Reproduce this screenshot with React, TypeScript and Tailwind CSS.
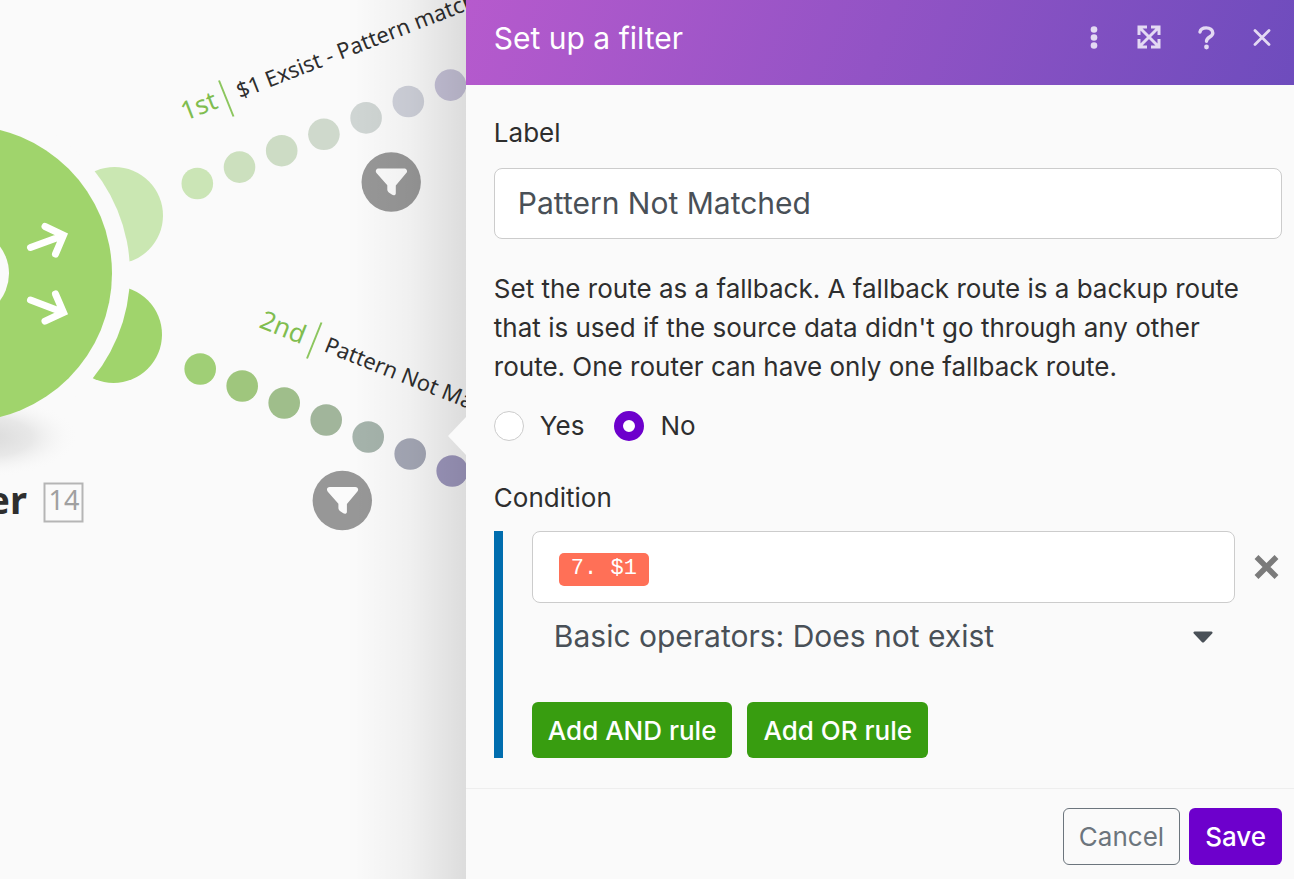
import React, { useState } from "react";

const DOT_COLORS = ["#a0cf76", "#9fc67d", "#9fbe8b", "#a1b59b", "#a5b3ab", "#a5a8b6", "#9f99bf"];
const PALE_DOT_COLORS = ["#cbe5b6", "#cce0be", "#cddcc5", "#cfd9cc", "#cfd5d3", "#cfd1da", "#c8c4da"];

function Funnel({ x, y }: { x: number; y: number }) {
  return (
    <g transform={`translate(${x} ${y})`}>
      <circle r="29.7" fill="#979797" />
      <path
        d="M-12.500-13.600h25.400c2.800 0 3.800 2.800 2.200 4.700L4.600 3.600v7.600c0 2-2 2.600-3.600 1.600l-3.400-2.400c-1-.8-1.500-1.700-1.500-2.900V3.200l-10.600-12c-1.700-2-.8-4.800 2-4.800z"
        fill="#fbfbfb"
      />
    </g>
  );
}

function ScenarioCanvas() {
  return (
    <section aria-label="Scenario" className="relative w-[36%] shrink-0 overflow-hidden bg-[#fafafa]">
      <svg width="640" height="879" viewBox="0 0 640 879" className="absolute top-0 left-0 max-w-none">
        <defs>
          <radialGradient id="ground">
            <stop offset="0" stopColor="#dadada" />
            <stop offset="0.5" stopColor="#e8e8e8" />
            <stop offset="1" stopColor="#fafafa" stopOpacity="0" />
          </radialGradient>
        </defs>
        <circle cx="114.500" cy="215.500" r="48.500" fill="#cae7b2" />
        <circle cx="113.500" cy="334.500" r="48.500" fill="#a0d46c" />
        <circle cx="-36" cy="273.500" r="166" fill="#fafafa" />
        <ellipse cx="-14" cy="437" rx="92" ry="40" fill="url(#ground)" />
        <circle cx="-36" cy="273.500" r="148" fill="#a0d46c" />
        <circle cx="-36" cy="273.500" r="45" fill="#fafafa" />
        <g fill="none" stroke="#fff" strokeWidth="7" strokeLinecap="round" strokeLinejoin="miter">
          <path d="M30.500 247.500 62 236M45 226.500l18.500 8.800-8 18.700" />
          <path d="M30.500 300 62 312M55.500 294l8 18.500-18.500 8.700" />
        </g>
        {PALE_DOT_COLORS.map((c, i) => (
          <circle key={c} cx={197.3 + 42.2 * i} cy={183.5 - 16.4 * i} r="15.800" fill={c} />
        ))}
        {DOT_COLORS.map((c, i) => (
          <circle key={c} cx={200.2 + 42 * i} cy={369 + 17 * i} r="15.800" fill={c} />
        ))}
        <Funnel x={391.2} y={182} />
        <Funnel x={342.3} y={500.5} />
        <g fontFamily='"Noto Sans", sans-serif'>
          <g transform="translate(185 121) rotate(-21.300)">
            <text fontSize="26" fill="#80bd4f">1st</text>
          </g>
          <path d="M219 80.500 233.500 116.500" stroke="#8cc65e" strokeWidth="2" />
          <g transform="translate(240 99) rotate(-21.300)">
            <text fontSize="22" fill="#2e2e2e">$1 Exsist - Pattern matched</text>
          </g>
          <g transform="translate(258 327) rotate(21.700)">
            <text fontSize="26" fill="#80bd4f">2nd</text>
          </g>
          <path d="M321.500 322.500 307 358.500" stroke="#8cc65e" strokeWidth="2" />
          <g transform="translate(323 351) rotate(21.700)">
            <text fontSize="22" fill="#2e2e2e">Pattern Not Matched</text>
          </g>
          <text x="27" y="514" fontSize="38" fontWeight="700" textAnchor="end" fill="#2e2e2e">Router</text>
          <rect x="44.500" y="483.500" width="38" height="38" fill="none" stroke="#b5b5b5" strokeWidth="2" />
          <text x="64" y="510" fontSize="27" textAnchor="middle" fill="#a0a0a0">14</text>
        </g>
      </svg>
      <div className="absolute inset-y-0 right-0 w-28 bg-linear-to-r from-transparent via-black/4 to-black/12" />
      <svg width="19" height="38" viewBox="0 0 19 38" className="absolute top-[417px] right-0">
        <path d="M19 0 1 19l18 19z" fill="#fafafa" />
      </svg>
    </section>
  );
}

function PanelHeader() {
  const button = "flex h-10 w-10 items-center justify-center";
  return (
    <header className="flex h-[85px] items-start justify-between bg-linear-[110deg] from-[#b65acd] to-[#6e4cbd] pt-[18px] pr-3 pl-7 text-[#e3d9f3]">
      <h1 className="text-[30px] leading-10 text-white">Set up a filter</h1>
      <div className="flex gap-4">
        <button type="button" aria-label="More options" className={button}>
          <svg width="10" height="24" viewBox="0 0 10 24" fill="currentColor">
            <circle cx="5" cy="3.500" r="3.300" />
            <circle cx="5" cy="11.500" r="3.300" />
            <circle cx="5" cy="19.500" r="3.300" />
          </svg>
        </button>
        <button type="button" aria-label="Expand" className={button}>
          <svg width="26" height="26" viewBox="0 0 26 26" fill="none" stroke="currentColor" strokeWidth="3">
            <path d="M2 10V2h8M14 2h8v8M22 14v8h-8M10 22H2v-8M3 3l18 18M21 3 3 21" />
          </svg>
        </button>
        <button type="button" aria-label="Help" className={button}>
          <svg width="18" height="24" viewBox="0 0 18 24" fill="none" stroke="currentColor" strokeWidth="3.400" strokeLinecap="round" strokeLinejoin="round">
            <path d="M3 6C3.500 3.200 6 1.900 9.200 1.900c4 0 6.600 2 6.600 5 0 4-6.300 4.200-6.300 8.300" />
            <circle cx="9.500" cy="21" r="2.400" fill="currentColor" stroke="none" />
          </svg>
        </button>
        <button type="button" aria-label="Close" className={button}>
          <svg width="18" height="18" viewBox="0 0 18 18" fill="none" stroke="currentColor" strokeWidth="2.800" strokeLinecap="round">
            <path d="M2 1.500l14 14M16 1.500l-14 14" />
          </svg>
        </button>
      </div>
    </header>
  );
}

function Radio({ label, checked, onChange }: { label: string; checked: boolean; onChange: () => void }) {
  return (
    <label className="flex items-center gap-4">
      <input
        type="radio"
        name="fallback"
        checked={checked}
        onChange={onChange}
        className="size-[30px] appearance-none rounded-full border border-[#ccc] bg-white checked:border-[9px] checked:border-[#6d00cc]"
      />
      {label}
    </label>
  );
}

function Condition() {
  return (
    <fieldset className="mt-[33px]">
      <legend className="leading-[39px]">Condition</legend>
      <div className="mt-[14px] border-l-[9px] border-[#006dae] pl-[29px]">
        <div className="flex items-center">
          <div className="flex h-[72px] flex-1 items-center gap-2 rounded-lg border border-[#ccc] bg-white px-[26px] pt-1">
            <span className="flex h-[33px] items-center rounded-[5px] bg-[#ff7057] px-3 font-['Liberation_Mono',monospace] text-[22px] leading-none whitespace-pre text-white">7. $1</span>
            <input aria-label="Condition value" className="min-w-0 flex-1 bg-transparent outline-none" />
          </div>
          <button type="button" aria-label="Remove condition" className="flex h-10 w-[47px] items-center justify-end">
            <svg width="32" height="24" viewBox="0 0 32 24" fill="none" stroke="#7b7b7b" strokeWidth="5.500">
              <path d="M6.500 2l20 20M26.500 2l-20 20" />
            </svg>
          </button>
        </div>
        <div className="relative mr-[47px]">
          <select aria-label="Operator" className="h-[69px] w-full appearance-none bg-transparent pb-0.5 pl-[22px] text-[30px] text-[#495057]">
            <option>Basic operators: Does not exist</option>
          </select>
          <svg width="20" height="12" viewBox="0 0 20 12" className="pointer-events-none absolute top-7 right-[22px]">
            <path d="M1.800.5h16.400c1.300 0 1.800 1.300 1 2.100l-8 8.300c-.8.800-1.700.8-2.400 0l-8-8.300C0 1.800.5.500 1.800.5z" fill="#495057" />
          </svg>
        </div>
        <div className="mt-[30px] flex gap-[15px] text-white">
          <button type="button" className="h-14 rounded-md bg-[#389d10] px-4 font-medium">Add AND rule</button>
          <button type="button" className="h-14 rounded-md bg-[#389d10] px-4 font-medium">Add OR rule</button>
        </div>
      </div>
    </fieldset>
  );
}

export default function App() {
  const [fallback, setFallback] = useState(false);
  const [name, setName] = useState("Pattern Not Matched");
  return (
    <main className="flex min-h-screen bg-[#fafafa] font-[Inter,sans-serif] text-[26px] text-[#2e2e2e]">
      <ScenarioCanvas />
      <form className="flex min-w-0 flex-1 flex-col bg-[#fafafa]" onSubmit={(e) => e.preventDefault()}>
        <PanelHeader />
        <div className="pt-7 pr-3 pb-[30px] pl-7">
          <label htmlFor="filter-label" className="block leading-[39px]">Label</label>
          <input
            id="filter-label"
            value={name}
            onChange={(e) => setName(e.target.value)}
            className="mt-4 block h-[71px] w-full rounded-lg border border-[#ccc] bg-white px-[23px] pb-0.5 text-[30px] text-[#495057]"
          />
          <fieldset className="mt-[30px]">
            <legend className="pr-5 leading-[39px]">
              Set the route as a fallback. A fallback route is a backup route that is used if the source data didn't go through any other route. One router can have only one fallback route.
            </legend>
            <div className="mt-5 flex gap-[30px] leading-[39px]">
              <Radio label="Yes" checked={fallback} onChange={() => setFallback(true)} />
              <Radio label="No" checked={!fallback} onChange={() => setFallback(false)} />
            </div>
          </fieldset>
          <Condition />
        </div>
        <footer className="flex justify-end gap-[9px] border-t border-[#eee] pt-[19px] pr-3 pb-[14px] pl-7">
          <button type="button" className="h-[57px] rounded-md border border-[#6c757d] px-[15px] text-[#6c757d]">Cancel</button>
          <button type="submit" className="h-[57px] rounded-md bg-[#6d00cc] px-4 font-medium text-white">Save</button>
        </footer>
      </form>
    </main>
  );
}
